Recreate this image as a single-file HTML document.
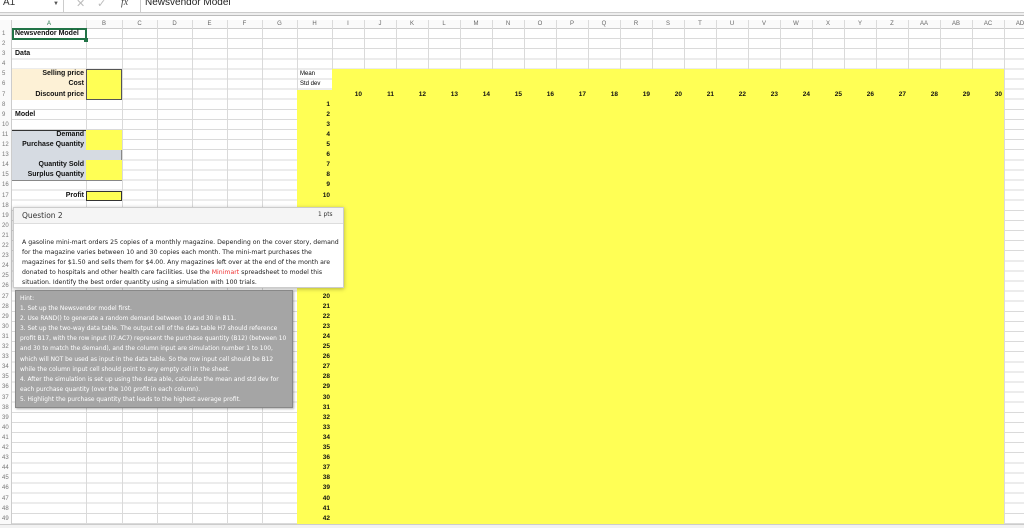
<!DOCTYPE html>
<html><head><meta charset="utf-8"><style>
*{margin:0;padding:0;box-sizing:border-box}
body{width:1024px;height:528px;overflow:hidden;background:#fff;font-family:"Liberation Sans",sans-serif;position:relative}
.a{position:absolute}
.grid{position:absolute;left:12px;top:29px;width:1012px;height:495px;
background-image:repeating-linear-gradient(to bottom,transparent 0,transparent 9.1px,#dadada 9.1px,#dadada 10.1px)}
.v{position:absolute;top:20px;width:1px;height:504px;background:#dadada}
.rn{position:absolute;left:2px;font-size:6px;color:#777;width:10px;line-height:10px}
.ch{position:absolute;top:20px;height:9px;font-size:6px;color:#666;text-align:center;line-height:9px}
.c{position:absolute;font-size:7px;font-weight:bold;line-height:10px;color:#111}
.n{position:absolute;font-size:6.5px;font-weight:bold;line-height:10px;text-align:right;color:#111}
.y{background:#ffff55}
.qt{font-family:"DejaVu Sans",sans-serif;font-size:6.2px;line-height:10px;color:#222;white-space:nowrap}
.ht{font-family:"DejaVu Sans",sans-serif;font-size:5.9px;line-height:10.1px;color:#fff;white-space:nowrap}
</style></head><body>
<div class="a" style="left:0;top:0;width:1024px;height:13px;background:#fff;border-bottom:1px solid #ccc"></div>
<div class="a" style="left:3px;top:-3px;font-size:10px;color:#333">A1</div>
<div class="a" style="left:53px;top:1px;font-size:6px;color:#555">▼</div>
<div class="a" style="left:63px;top:0;width:1px;height:12px;background:#ccc"></div>
<div class="a" style="left:76px;top:-3px;font-size:11px;color:#bbb">✕</div>
<div class="a" style="left:97px;top:-3px;font-size:11px;color:#bbb">✓</div>
<div class="a" style="left:121px;top:-3px;font-size:10px;font-style:italic;font-family:'Liberation Serif',serif;color:#444">fx</div>
<div class="a" style="left:140px;top:0;width:1px;height:12px;background:#ccc"></div>
<div class="a" style="left:145px;top:-3px;font-size:10px;color:#222">Newsvendor Model</div>
<div class="a" style="left:0;top:13px;width:1024px;height:3px;background:#eee;border-bottom:1px solid #bbb"></div>
<div class="a" style="left:0;top:20px;width:1024px;height:9px;background:#fafafa;border-bottom:1px solid #ccc"></div>
<div class="a" style="left:0;top:20px;width:12px;height:504px;background:#fafafa;border-right:1px solid #ccc"></div>
<div class="grid"></div>
<div class="v" style="left:86px"></div><div class="v" style="left:122px"></div><div class="v" style="left:157px"></div><div class="v" style="left:192px"></div><div class="v" style="left:227px"></div><div class="v" style="left:262px"></div><div class="v" style="left:297px"></div><div class="v" style="left:332px"></div>
<div class="v" style="left:364px"></div><div class="v" style="left:396px"></div><div class="v" style="left:428px"></div><div class="v" style="left:460px"></div><div class="v" style="left:492px"></div><div class="v" style="left:524px"></div><div class="v" style="left:556px"></div><div class="v" style="left:588px"></div><div class="v" style="left:620px"></div><div class="v" style="left:652px"></div><div class="v" style="left:684px"></div><div class="v" style="left:716px"></div><div class="v" style="left:748px"></div><div class="v" style="left:780px"></div><div class="v" style="left:812px"></div><div class="v" style="left:844px"></div><div class="v" style="left:876px"></div><div class="v" style="left:908px"></div><div class="v" style="left:940px"></div><div class="v" style="left:972px"></div><div class="v" style="left:1004px"></div>
<div class="ch" style="left:12px;width:74px;color:#217346">A</div><div class="ch" style="left:86px;width:36px">B</div><div class="ch" style="left:122px;width:35px">C</div><div class="ch" style="left:157px;width:35px">D</div><div class="ch" style="left:192px;width:35px">E</div><div class="ch" style="left:227px;width:35px">F</div><div class="ch" style="left:262px;width:35px">G</div><div class="ch" style="left:297px;width:35px">H</div>
<div class="ch" style="left:332px;width:32px">I</div><div class="ch" style="left:364px;width:32px">J</div><div class="ch" style="left:396px;width:32px">K</div><div class="ch" style="left:428px;width:32px">L</div><div class="ch" style="left:460px;width:32px">M</div><div class="ch" style="left:492px;width:32px">N</div><div class="ch" style="left:524px;width:32px">O</div><div class="ch" style="left:556px;width:32px">P</div><div class="ch" style="left:588px;width:32px">Q</div><div class="ch" style="left:620px;width:32px">R</div><div class="ch" style="left:652px;width:32px">S</div><div class="ch" style="left:684px;width:32px">T</div><div class="ch" style="left:716px;width:32px">U</div><div class="ch" style="left:748px;width:32px">V</div><div class="ch" style="left:780px;width:32px">W</div><div class="ch" style="left:812px;width:32px">X</div><div class="ch" style="left:844px;width:32px">Y</div><div class="ch" style="left:876px;width:32px">Z</div><div class="ch" style="left:908px;width:32px">AA</div><div class="ch" style="left:940px;width:32px">AB</div><div class="ch" style="left:972px;width:32px">AC</div><div class="ch" style="left:1004px;width:32px">AD</div>
<div class="rn" style="top:29px">1</div><div class="rn" style="top:39px">2</div><div class="rn" style="top:49px">3</div><div class="rn" style="top:59px">4</div><div class="rn" style="top:69px">5</div><div class="rn" style="top:79px">6</div><div class="rn" style="top:90px">7</div><div class="rn" style="top:100px">8</div><div class="rn" style="top:110px">9</div><div class="rn" style="top:120px">10</div><div class="rn" style="top:130px">11</div><div class="rn" style="top:140px">12</div><div class="rn" style="top:150px">13</div><div class="rn" style="top:160px">14</div><div class="rn" style="top:170px">15</div><div class="rn" style="top:180px">16</div><div class="rn" style="top:191px">17</div><div class="rn" style="top:201px">18</div><div class="rn" style="top:211px">19</div><div class="rn" style="top:221px">20</div><div class="rn" style="top:231px">21</div><div class="rn" style="top:241px">22</div><div class="rn" style="top:251px">23</div><div class="rn" style="top:261px">24</div><div class="rn" style="top:271px">25</div><div class="rn" style="top:281px">26</div><div class="rn" style="top:292px">27</div><div class="rn" style="top:302px">28</div><div class="rn" style="top:312px">29</div><div class="rn" style="top:322px">30</div><div class="rn" style="top:332px">31</div><div class="rn" style="top:342px">32</div><div class="rn" style="top:352px">33</div><div class="rn" style="top:362px">34</div><div class="rn" style="top:372px">35</div><div class="rn" style="top:382px">36</div><div class="rn" style="top:393px">37</div><div class="rn" style="top:403px">38</div><div class="rn" style="top:413px">39</div><div class="rn" style="top:423px">40</div><div class="rn" style="top:433px">41</div><div class="rn" style="top:443px">42</div><div class="rn" style="top:453px">43</div><div class="rn" style="top:463px">44</div><div class="rn" style="top:473px">45</div><div class="rn" style="top:483px">46</div><div class="rn" style="top:494px">47</div><div class="rn" style="top:504px">48</div><div class="rn" style="top:514px">49</div>
<div class="a" style="left:0;top:524px;width:1024px;height:4px;background:#f2f2f2;border-top:1px solid #ccc"></div>
<div class="a" style="left:12px;top:28px;width:75px;height:12px;border:2px solid #217346"></div>
<div class="a" style="left:84px;top:38px;width:4px;height:4px;background:#217346"></div>
<div class="c" style="left:15px;top:29px">Newsvendor Model</div>
<div class="c" style="left:15px;top:49px">Data</div>
<div class="a" style="left:12px;top:69px;width:74px;height:31px;background:#fdf1d6"></div>
<div class="a y" style="left:86px;top:69px;width:36px;height:31px;border:1px solid #555"></div>
<div class="c" style="left:12px;width:72px;text-align:right;top:69px">Selling price</div>
<div class="c" style="left:12px;width:72px;text-align:right;top:79px">Cost</div>
<div class="c" style="left:12px;width:72px;text-align:right;top:90px">Discount price</div>
<div class="c" style="left:15px;top:110px">Model</div>
<div class="a" style="left:12px;top:130px;width:110px;height:51px;background:#d6dbe2;border-right:1px solid #888;border-bottom:1px solid #888;border-top:1px solid #333"></div>
<div class="a y" style="left:86px;top:130px;width:36px;height:20px"></div>
<div class="a y" style="left:86px;top:160px;width:36px;height:20px"></div>
<div class="c" style="left:12px;width:72px;text-align:right;top:130px">Demand</div>
<div class="c" style="left:12px;width:72px;text-align:right;top:140px">Purchase Quantity</div>
<div class="c" style="left:12px;width:72px;text-align:right;top:160px">Quantity Sold</div>
<div class="c" style="left:12px;width:72px;text-align:right;top:170px">Surplus Quantity</div>
<div class="a y" style="left:86px;top:191px;width:36px;height:10px;border:1px solid #333"></div>
<div class="c" style="left:12px;width:72px;text-align:right;top:191px">Profit</div>
<div class="a y" style="left:332px;top:69px;width:672px;height:455px"></div>
<div class="a y" style="left:297px;top:90px;width:35px;height:434px"></div>
<div class="a" style="left:300px;top:69px;font-size:6px;line-height:10px">Mean</div>
<div class="a" style="left:300px;top:79px;font-size:6px;line-height:10px">Std dev</div>
<div class="n" style="left:332px;width:30px;top:90px">10</div><div class="n" style="left:364px;width:30px;top:90px">11</div><div class="n" style="left:396px;width:30px;top:90px">12</div><div class="n" style="left:428px;width:30px;top:90px">13</div><div class="n" style="left:460px;width:30px;top:90px">14</div><div class="n" style="left:492px;width:30px;top:90px">15</div><div class="n" style="left:524px;width:30px;top:90px">16</div><div class="n" style="left:556px;width:30px;top:90px">17</div><div class="n" style="left:588px;width:30px;top:90px">18</div><div class="n" style="left:620px;width:30px;top:90px">19</div><div class="n" style="left:652px;width:30px;top:90px">20</div><div class="n" style="left:684px;width:30px;top:90px">21</div><div class="n" style="left:716px;width:30px;top:90px">22</div><div class="n" style="left:748px;width:30px;top:90px">23</div><div class="n" style="left:780px;width:30px;top:90px">24</div><div class="n" style="left:812px;width:30px;top:90px">25</div><div class="n" style="left:844px;width:30px;top:90px">26</div><div class="n" style="left:876px;width:30px;top:90px">27</div><div class="n" style="left:908px;width:30px;top:90px">28</div><div class="n" style="left:940px;width:30px;top:90px">29</div><div class="n" style="left:972px;width:30px;top:90px">30</div>
<div class="n" style="left:297px;width:33px;top:100px">1</div><div class="n" style="left:297px;width:33px;top:110px">2</div><div class="n" style="left:297px;width:33px;top:120px">3</div><div class="n" style="left:297px;width:33px;top:130px">4</div><div class="n" style="left:297px;width:33px;top:140px">5</div><div class="n" style="left:297px;width:33px;top:150px">6</div><div class="n" style="left:297px;width:33px;top:160px">7</div><div class="n" style="left:297px;width:33px;top:170px">8</div><div class="n" style="left:297px;width:33px;top:180px">9</div><div class="n" style="left:297px;width:33px;top:191px">10</div><div class="n" style="left:297px;width:33px;top:292px">20</div><div class="n" style="left:297px;width:33px;top:302px">21</div><div class="n" style="left:297px;width:33px;top:312px">22</div><div class="n" style="left:297px;width:33px;top:322px">23</div><div class="n" style="left:297px;width:33px;top:332px">24</div><div class="n" style="left:297px;width:33px;top:342px">25</div><div class="n" style="left:297px;width:33px;top:352px">26</div><div class="n" style="left:297px;width:33px;top:362px">27</div><div class="n" style="left:297px;width:33px;top:372px">28</div><div class="n" style="left:297px;width:33px;top:382px">29</div><div class="n" style="left:297px;width:33px;top:393px">30</div><div class="n" style="left:297px;width:33px;top:403px">31</div><div class="n" style="left:297px;width:33px;top:413px">32</div><div class="n" style="left:297px;width:33px;top:423px">33</div><div class="n" style="left:297px;width:33px;top:433px">34</div><div class="n" style="left:297px;width:33px;top:443px">35</div><div class="n" style="left:297px;width:33px;top:453px">36</div><div class="n" style="left:297px;width:33px;top:463px">37</div><div class="n" style="left:297px;width:33px;top:473px">38</div><div class="n" style="left:297px;width:33px;top:483px">39</div><div class="n" style="left:297px;width:33px;top:494px">40</div><div class="n" style="left:297px;width:33px;top:504px">41</div><div class="n" style="left:297px;width:33px;top:514px">42</div>
<div class="a" style="left:13px;top:207px;width:331px;height:81px;background:#fff;border:1px solid #ccc;box-shadow:0 1px 4px rgba(0,0,0,.3)"></div>
<div class="a" style="left:14px;top:208px;width:329px;height:16px;background:#f5f5f5;border-bottom:1px solid #ddd"></div>
<div class="a" style="left:22px;top:211px;font-family:'DejaVu Sans',sans-serif;font-size:7.5px;color:#333">Question 2</div>
<div class="a" style="left:318px;top:212px;font-family:'DejaVu Sans',sans-serif;font-size:5.8px;color:#333">1 pts</div>
<div class="a qt" style="left:22px;top:238px">A gasoline mini-mart orders 25 copies of a monthly magazine. Depending on the cover story, demand<br>for the magazine varies between 10 and 30 copies each month. The mini-mart purchases the<br>magazines for $1.50 and sells them for $4.00. Any magazines left over at the end of the month are<br>donated to hospitals and other health care facilities. Use the <span style="color:#e33">Minimart</span> spreadsheet to model this<br>situation. Identify the best order quantity using a simulation with 100 trials.</div>
<div class="a" style="left:15px;top:290px;width:278px;height:118px;background:#a5a5a5;border:1px solid #888;box-shadow:1px 1px 2px rgba(0,0,0,.3)"></div>
<div class="a ht" style="left:20px;top:294px">Hint:<br>1. Set up the Newsvendor model first.<br>2. Use RAND() to generate a random demand between 10 and 30 in B11.<br>3. Set up the two-way data table. The output cell of the data table H7 should reference<br>profit B17, with the row input (I7:AC7) represent the purchase quantity (B12) (between 10<br>and 30 to match the demand), and the column input are simulation number 1 to 100,<br>which will NOT be used as input in the data table. So the row input cell should be B12<br>while the column input cell should point to any empty cell in the sheet.<br>4. After the simulation is set up using the data able, calculate the mean and std dev for<br>each purchase quantity (over the 100 profit in each column).<br>5. Highlight the purchase quantity that leads to the highest average profit.</div>
</body></html>
